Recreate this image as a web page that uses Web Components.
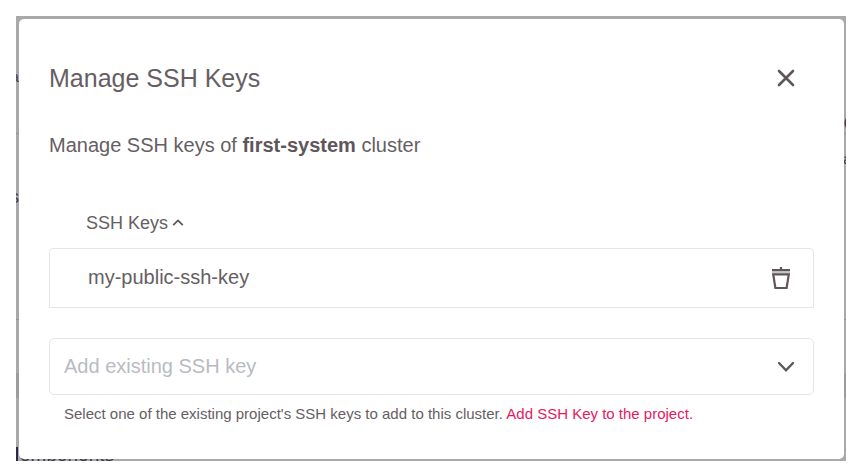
<!DOCTYPE html>
<html lang="en">
<head>
<meta charset="utf-8">
<title>Manage SSH Keys</title>
<style>
body{margin:0;background:#fff;font-family:"Liberation Sans",Arial,sans-serif;color:#665e63}
b{color:#5f565b}
</style>
</head>
<body>
<modal-backdrop>
  <page-behind slot="page"></page-behind>
  <modal-dialog heading="Manage SSH Keys">
    <span slot="intro">Manage SSH keys of <b>first-system</b> cluster</span>
    <key-list heading="SSH Keys"><key-row>my-public-ssh-key</key-row></key-list>
    <key-picker placeholder="Add existing SSH key">
      <span slot="hint">Select one of the existing project's SSH keys to add to this cluster.</span>
    </key-picker>
  </modal-dialog>
</modal-backdrop>
<script>
function define(name, html, setup) {
  customElements.define(name, class extends HTMLElement {
    constructor() {
      super();
      this.attachShadow({mode: 'open'}).innerHTML = html;
    }
    connectedCallback() { if (setup) setup(this, this.shadowRoot); }
  });
}
const reset = `*{box-sizing:border-box}
button{font:inherit;color:inherit;background:none;border:0;padding:0;margin:0;cursor:pointer}
svg{display:block;fill:none;stroke:#5f565b}`;

define('modal-backdrop', `<style>${reset}
:host{display:block;position:relative;margin:16px 14px 14px 16px;padding:3px 2px 2px 3px;background:#a9a9a9;overflow:hidden}
.front{position:relative}
</style><slot name="page"></slot><div class="front"><slot></slot></div>`);

/* The dimmed page under the dialog: only its outermost pixels show. */
define('page-behind', `<style>
:host{position:absolute;inset:0;overflow:hidden}
i,span{position:absolute}
i{left:0;right:0;height:1px;background:#969696}
.band{height:25px;background:#9b9d9c}
.bar{right:auto;bottom:0;width:2px;height:14px;background:#2b2850}
span{color:#3c3a50;line-height:20px;white-space:nowrap}
</style>
<div aria-hidden="true">
<i style="top:117px"></i><i style="top:303px"></i><i class="band" style="top:357px"></i><i class="bar"></i>
<span style="left:-5px;top:51px;font-size:14px">a</span>
<span style="left:-6px;top:171px;font-size:18px">s</span>
<span style="right:-12px;top:97px;font-size:20px">C</span>
<span style="right:-5px;top:133px;font-size:14px">a</span>
<span style="left:4px;bottom:-4px;font-size:19px">omponents</span>
</div>`);

define('modal-dialog', `<style>${reset}
:host{display:block;background:#fff;border-radius:5px;padding:41px 30px 35px}
header{display:flex;align-items:center;justify-content:space-between;padding-right:18px}
h1{margin:0;font-size:25px;line-height:36px;font-weight:400}
p{margin:35px 0 52px;font-size:20px;line-height:28px}
</style>
<header><h1></h1><button aria-label="Close"><svg width="20" height="20" viewBox="0 0 20 20" stroke-width="2.6" stroke-linecap="round"><path d="M3 3 17 17M17 3 3 17"/></svg></button></header>
<p><slot name="intro"></slot></p>
<slot></slot>`, (el, root) => { root.querySelector('h1').textContent = el.getAttribute('heading'); });

define('key-list', `<style>${reset}
:host{display:block}
.sort{display:flex;align-items:center;gap:4px;margin-left:37px;font-size:18px;line-height:24px}
.rows{margin-top:13px}
</style>
<button class="sort"><span></span><svg width="12" height="12" viewBox="0 0 12 12" stroke-width="1.8"><path d="M1.2 8.2 6 3.4 10.8 8.2"/></svg></button>
<div class="rows"><slot></slot></div>`, (el, root) => { root.querySelector('span').textContent = el.getAttribute('heading'); });

define('key-row', `<style>${reset}
:host{display:flex;align-items:center;justify-content:space-between;box-sizing:border-box;padding:14px 22px 16px 38px;border:1px solid #e6e6e6;border-radius:4px 4px 0 0;font-size:20px;line-height:28px}
</style>
<span><slot></slot></span>
<button aria-label="Delete key"><svg width="20" height="24" viewBox="0 0 20 24" stroke-width="2.2"><path d="M1 7.4H19" stroke="#c9c6c8"/><path d="M10 2V5"/><path d="M1 5.1H19"/><path d="M2.2 9.4H17.8L15.6 23H4.4Z"/></svg></button>`);

define('key-picker', `<style>${reset}
:host{display:block;margin-top:30px}
.box{display:grid;align-items:center}
select,svg{grid-area:1/1}
select{appearance:none;width:100%;font:inherit;font-size:20px;line-height:28px;color:#b9bbc3;background:#fff;border:1px solid #e6e6e6;border-radius:5px;padding:13px 48px 14px 14px}
svg{justify-self:end;margin-right:19px;pointer-events:none}
p{margin:9px 0 0 15px;font-size:15px;line-height:20px}
a{color:#e6195e;text-decoration:none}
</style>
<div class="box"><select aria-describedby="hint"><option></option></select>
<svg width="18" height="12" viewBox="0 0 18 12" stroke-width="2.4" stroke-linecap="round"><path d="M2 2 9 9.3 16 2"/></svg></div>
<p id="hint"><slot name="hint"></slot> <a href="#">Add SSH Key to the project.</a></p>`, (el, root) => {
  const text = el.getAttribute('placeholder');
  root.querySelector('option').textContent = text;
  root.querySelector('select').setAttribute('aria-label', text);
});
</script>
</body>
</html>
